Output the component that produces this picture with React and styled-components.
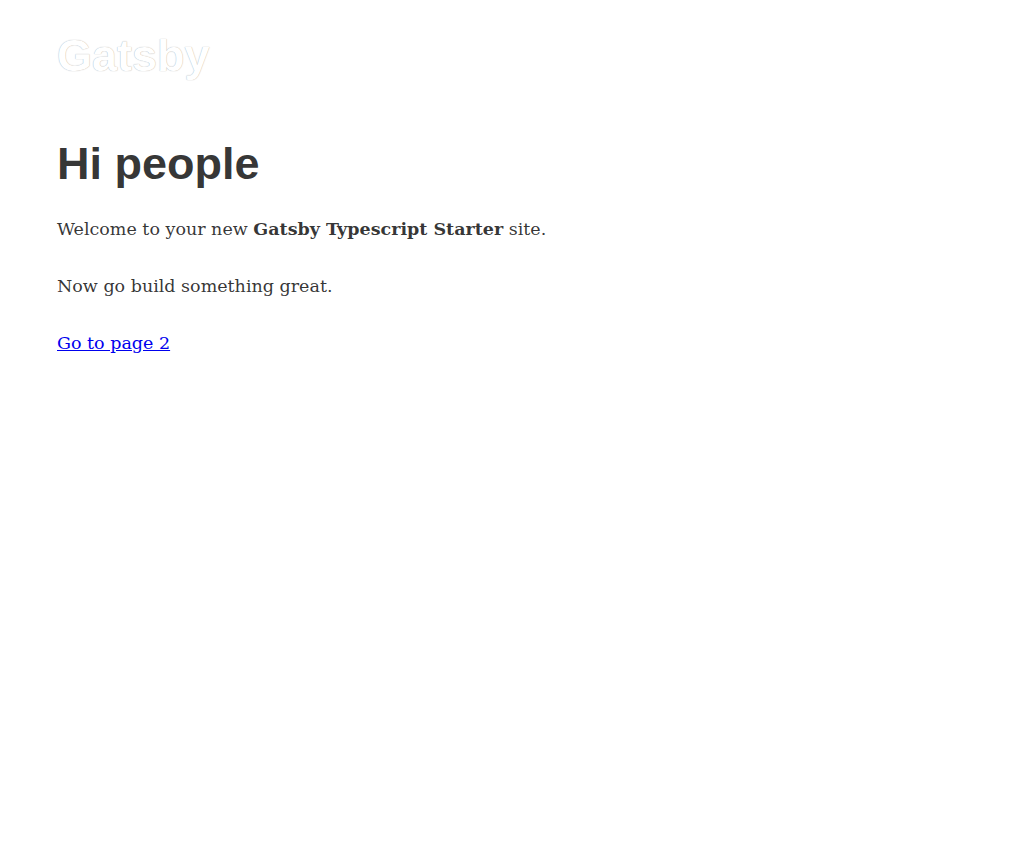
import React from "react";
import styled, { createGlobalStyle } from "styled-components";

const Global = createGlobalStyle`
  html, body { margin: 0; padding: 0; background: #fff; }
  body {
    font-family: "DejaVu Serif", "Liberation Serif", serif;
    color: hsla(0, 0%, 0%, 0.8);
    -webkit-font-smoothing: antialiased;
  }
`;

const Header = styled.header`
  background: #fff;
`;

const HeaderInner = styled.div`
  padding: 28px 57px 0;
`;

const SiteTitle = styled.h1`
  margin: 0;
  font-family: "Liberation Sans", Arial, sans-serif;
  font-weight: 700;
  font-size: 45px;
  line-height: 56px;
  a {
    color: #fff;
    text-decoration: none;
    text-shadow: 0 0 1px rgba(0, 0, 0, 0.4);
  }
`;

const Main = styled.main`
  padding: 52px 57px 0;
`;

const Title = styled.h1`
  margin: 0 0 22px;
  font-family: "Liberation Sans", Arial, sans-serif;
  font-weight: 700;
  font-size: 45px;
  line-height: 56px;
  color: hsla(0, 0%, 0%, 0.8);
`;

const Para = styled.p`
  margin: 0 0 27px;
  font-size: 17.5px;
  line-height: 30px;
  b { font-weight: 700; }
`;

const Link = styled.a`
  color: #0000ee;
  text-decoration: underline;
  font-size: 17.5px;
  line-height: 30px;
`;

export default function App() {
  return (
    <>
      <Global />
      <Header>
        <HeaderInner>
          <SiteTitle><a href="#">Gatsby</a></SiteTitle>
        </HeaderInner>
      </Header>
      <Main>
        <Title>Hi people</Title>
        <Para>Welcome to your new <b>Gatsby Typescript Starter</b> site.</Para>
        <Para>Now go build something great.</Para>
        <Link href="#">Go to page 2</Link>
      </Main>
    </>
  );
}
